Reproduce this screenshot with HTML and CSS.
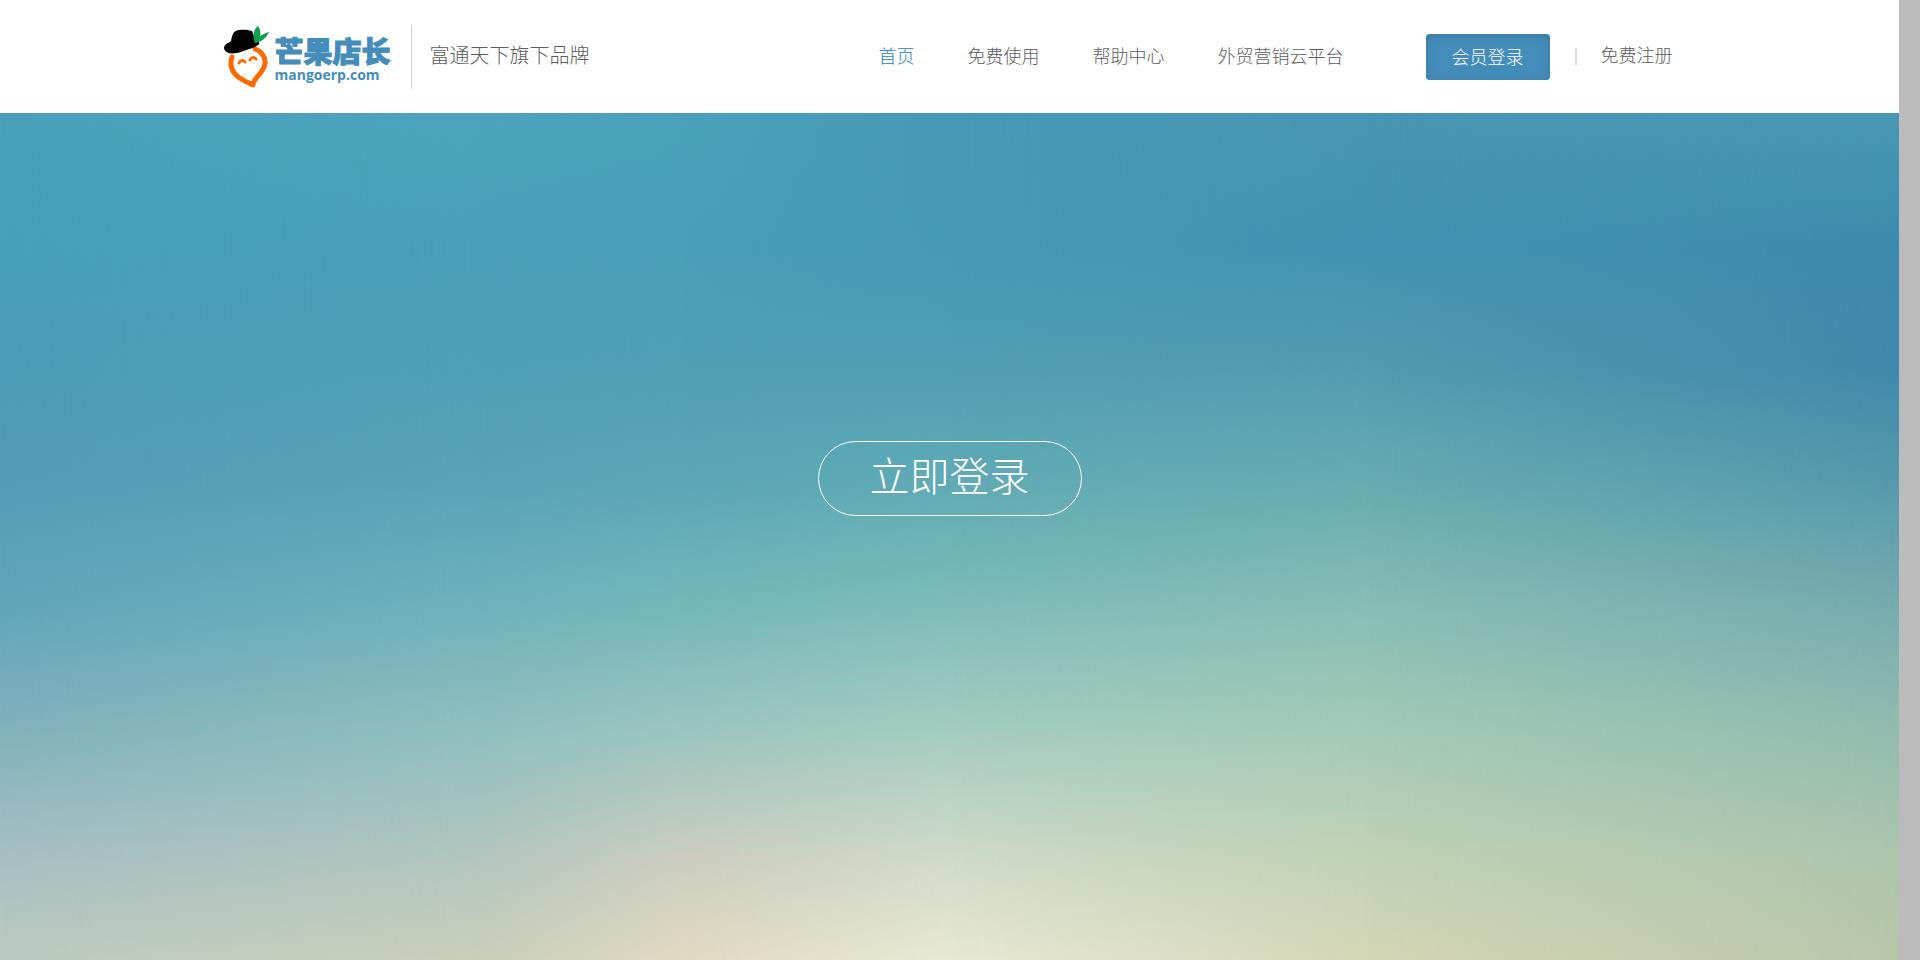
FILE: index.html
```html
<!DOCTYPE html>
<html lang="zh-CN">
<head>
<meta charset="utf-8">
<title>芒果店长</title>
<link rel="stylesheet" href="styles.css">
</head>
<body>
<div class="page">
  <header class="header">
    <div class="container">
      <a class="logo" href="#" aria-label="芒果店长">
        <svg class="logo-mark" viewBox="0 0 46 64" aria-hidden="true">
          <path d="M9 32C7 38 8 44 12 49C16 54 24 57 30 60C30 53 40 49 42 39C43 32 38 26 32 24" fill="none" stroke="#ff6a00" stroke-width="5" stroke-linecap="round" stroke-linejoin="round"/>
          <path d="M16 38C17 35 20 35 22 37M27 35C28 32 31 32 33 34" fill="none" stroke="#ff6a00" stroke-width="3" stroke-linecap="round"/>
          <path d="M1 23C1 19 6 18 8 16C9 11 10 7 13 6C18 4 24 5 29 6C30 8 31 12 32 15C35 16 37 17 36 19C33 23 24 24 18 27C12 29 2 30 1 23Z" fill="#000"/>
          <path d="M32 18C29 12 31 3 35 1C37 4 38 7 37 11C40 9 43 8 46 7C44 12 39 17 32 18Z" fill="#0a9f4b"/>
        </svg>
        <span class="logo-text">
          <span class="logo-name">芒果店长</span>
          <span class="logo-domain">mangoerp.com</span>
        </span>
      </a>
      <span class="tagline">富通天下旗下品牌</span>
      <nav class="nav">
        <a class="nav-link active" href="#">首页</a>
        <a class="nav-link" href="#">免费使用</a>
        <a class="nav-link" href="#">帮助中心</a>
        <a class="nav-link" href="#">外贸营销云平台</a>
      </nav>
      <div class="account">
        <a class="login" href="#">会员登录</a>
        <span class="separator"></span>
        <a class="register" href="#">免费注册</a>
      </div>
    </div>
  </header>
  <main class="hero">
    <div class="sky sky-1"></div>
    <div class="sky sky-2"></div>
    <div class="sky sky-3"></div>
    <div class="sky sky-4"></div>
    <div class="sky sky-5"></div>
    <div class="sky sky-6"></div>
    <div class="hero-content">
      <a class="enter" href="#">立即登录</a>
    </div>
  </main>
</div>
<div class="rail"></div>
</body>
</html>
```
FILE: styles.css
```css
* { box-sizing: border-box; }

body {
  margin: 0;
  min-height: 100vh;
  display: grid;
  grid-template-columns: 1fr 21px;
  font-family: "Noto Sans CJK SC", sans-serif;
  font-weight: 300;
  color: #5c5c5c;
}

a { color: inherit; text-decoration: none; }

.page { display: flex; flex-direction: column; min-width: 0; }
.rail { background: #bbb; }

.header { background: #fff; padding: 24px 0; }

.container {
  display: flex;
  align-items: center;
  width: 92%;
  max-width: 1454px;
  min-height: 65px;
  margin: 0 auto;
  padding-right: 4px;
}

.logo {
  display: flex;
  gap: 6px;
  height: 64px;
  padding-right: 19px;
  border-right: 1px solid #ccc;
}
.logo-mark { width: 46px; height: 64px; }
.logo-text {
  display: flex;
  flex-direction: column;
  width: 117px;
  padding-top: 8px;
  color: #448dba;
}
.logo-name {
  font-size: 29px;
  line-height: 34px;
  font-weight: 900;
  -webkit-text-stroke: 1px #448dba;
}
.logo-domain {
  font-family: "Open Sans", sans-serif;
  font-size: 14px;
  line-height: 16px;
  font-weight: 700;
}

.tagline { margin-left: 18px; padding-bottom: 4px; font-size: 20px; line-height: 28px; white-space: nowrap; }

.nav { display: flex; gap: 53px; margin-left: auto; padding-bottom: 4px; }
.nav-link, .login, .register { font-size: 18px; line-height: 26px; white-space: nowrap; }
.nav-link.active { color: #2585bb; }

.account { display: flex; align-items: center; margin-left: 82px; }
.login {
  padding: 9px 26px 11px;
  border-radius: 4px;
  background: #448dba;
  box-shadow: inset 0 2px 10px #3b7ba2;
  color: #fff;
}
.separator { width: 2px; height: 17px; margin: 0 24px 0 25px; background: #ddd; }
.register { padding-bottom: 6px; }

.hero { display: grid; flex: 1; }
.sky, .hero-content { grid-area: 1 / 1; }

/* Each column of sky fades in over the one to its left. */
.sky-1 {
  background: linear-gradient(#49a0ba, #479fba 16%, #4b9cb8 30%, #529db9 44%, #64a6ba 59%, #81b2bd 73%, #a7bfc2 88%, #bccbc0);
}
.sky-2 {
  background: linear-gradient(#4ca4bc, #4a9fba 16%, #4e9fb8 30%, #57a4b8 44%, #71b2bc 59%, #8fbfbe 73%, #b2c6bf 88%, #c9cfb9);
  mask-image: linear-gradient(90deg, transparent, #000 25%);
}
.sky-3 {
  background: linear-gradient(#4aa1ba, #499eb9 16%, #4f9fb6 30%, #5ba7b6 44%, #77b8ba 59%, #9bc5bf 73%, #cccdc0 88%, #e1dac0);
  mask-image: linear-gradient(90deg, transparent 25%, #000 36%);
}
.sky-4 {
  background: linear-gradient(#4699b6, #469ab7 16%, #4f9eb5 30%, #61abb5 44%, #80bdb9 59%, #a4ccc0 73%, #d0dac8 88%, #e8e8d4);
  mask-image: linear-gradient(90deg, transparent 36%, #000 50%);
}
.sky-5 {
  background: linear-gradient(#4795b3, #4292b3 16%, #509cb1 30%, #69abb1 44%, #87beb4 59%, #a4cab7 73%, #c0d2b5 88%, #d5d6b6);
  mask-image: linear-gradient(90deg, transparent 50%, #000 72%);
}
.sky-6 {
  background: linear-gradient(#4898b3, #3c8aad 16%, #4088ac 30%, #5799ab 44%, #77acae 59%, #92bbae 73%, #adc5ad 88%, #b9c6a8);
  mask-image: linear-gradient(90deg, transparent 72%, #000);
}

.hero-content { position: relative; padding: 328px 16px 48px; text-align: center; }
.enter {
  display: inline-block;
  padding: 3px 51px 11px;
  border: 1px solid #fff;
  border-radius: 38px;
  color: #fff;
  font-size: 40px;
  line-height: 59px;
  white-space: nowrap;
}
```
